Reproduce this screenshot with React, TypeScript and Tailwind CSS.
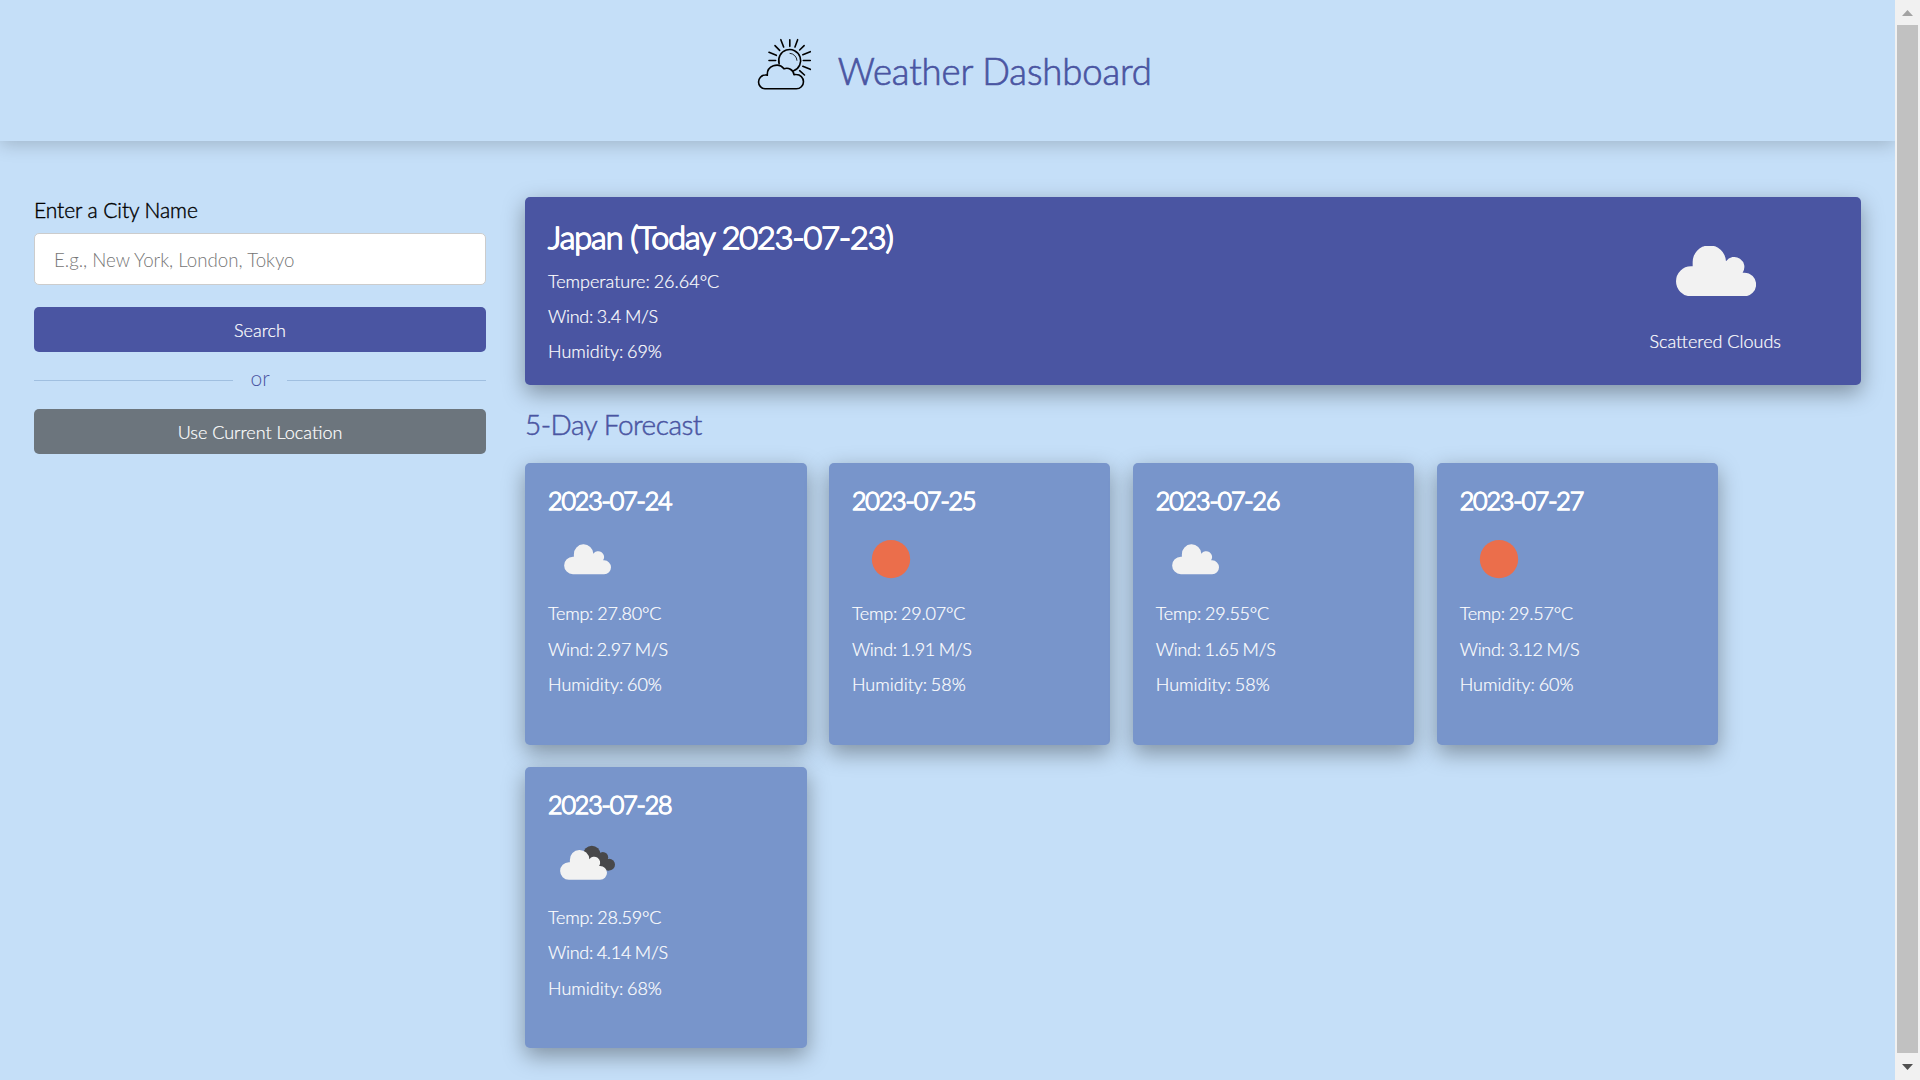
import React from 'react';

const CLOUD = 'M273 348A45 45 0 0 1 273 258H278V247A50 50 0 0 1 378 243A30 30 0 0 1 428 277H433A35.5 35.5 0 0 1 433 348Z';

type Kind = 'cloud' | 'sun' | 'broken';

function DayIcon({ kind }: { kind: Kind }) {
  return (
    <svg viewBox="0 0 234 234" className="mt-[5px] block h-[78px] w-[78px]">
      {kind === 'cloud' && (
        <path d={CLOUD} fill="#f2f2f2" transform="translate(-85 -41) scale(.585)" />
      )}
      {kind === 'sun' && <circle cx="117" cy="117.500" r="57.500" fill="#eb6e4b" />}
      {kind === 'broken' && (
        <g>
          <g fill="#48484a">
            <circle cx="131.500" cy="91" r="26" />
            <circle cx="164.500" cy="100" r="16" />
            <circle cx="183.500" cy="122" r="17.500" />
            <path d="M121 90H165L183 108V139.500H121Z" />
          </g>
          <path d={CLOUD} fill="#f2f2f2" transform="translate(-97 -36.200) scale(.585)" />
        </g>
      )}
    </svg>
  );
}

const days: { date: string; kind: Kind; temp: string; wind: string; humidity: number }[] = [
  { date: '2023-07-24', kind: 'cloud', temp: '27.80', wind: '2.97', humidity: 60 },
  { date: '2023-07-25', kind: 'sun', temp: '29.07', wind: '1.91', humidity: 58 },
  { date: '2023-07-26', kind: 'cloud', temp: '29.55', wind: '1.65', humidity: 58 },
  { date: '2023-07-27', kind: 'sun', temp: '29.57', wind: '3.12', humidity: 60 },
  { date: '2023-07-28', kind: 'broken', temp: '28.59', wind: '4.14', humidity: 68 },
];

function Logo() {
  return (
    <svg viewBox="50 52 166 162" className="h-[54px] w-[55.3px]" fill="none" stroke="#000" strokeWidth="4.800" strokeLinecap="round" strokeLinejoin="round">
      <path d="M74 207.500A20.800 20.800 0 0 1 74 166Q78 165.500 81 166.500A28 28 0 0 1 131 147.500A22 22 0 0 1 161 165Q165 164 168 164.500A21.500 21.500 0 0 1 168 207.500Z" />
      <path d="M116.500 132A33 33 0 1 1 160 153.500" />
      <path d="M149 101A22 22 0 0 1 170 122" strokeWidth="2.500" />
      <path d="M148.500 60V80M172 60L164 82M191.500 78L178 91M210 96L187.500 105M210 122.500H189M210 149L187.500 140M192.500 166L178 153M121.500 60L130 82M104 78L118 92M86 98L108 107M86 122.500H106" />
    </svg>
  );
}

export default function App() {
  return (
    <div className="flex h-[1080px] w-[1920px] overflow-hidden bg-[#c5dff8] font-['Lato',sans-serif] text-[18px] font-light">
      <div className="w-[1895px] overflow-hidden">
        <header className="flex h-[141px] pl-[756.500px] pt-[37px] shadow-[0_3px_18px_rgba(0,0,0,0.2)]">
          <Logo />
          <h1 className="ml-[26px] mt-[11.500px] whitespace-nowrap text-[36.500px] leading-[44px] tracking-[-0.120px] text-[#4a55a2] [-webkit-text-stroke:0.700px]">Weather Dashboard</h1>
        </header>
        <main className="flex pl-[34px] pt-[56px]">
          <section className="w-[452px]">
            <h3 className="whitespace-nowrap text-[21px] leading-[26px] tracking-[-0.080px] text-black [-webkit-text-stroke:0.400px]">Enter a City Name</h3>
            <input
              placeholder="E.g., New York, London, Tokyo"
              className="mt-[10px] block h-[52px] w-full rounded-[5px] border border-[#cccccc] bg-white px-[19px] pt-[2px] text-[18.700px] outline-none placeholder:text-[#757575]"
            />
            <button className="mt-[22px] block h-[45px] w-full rounded-[5px] bg-[#4a55a2] pt-[2px] text-white [-webkit-text-stroke:0.200px]">Search</button>
            <div className="flex h-[57px] items-center">
              <div className="h-px flex-1 bg-[#a0bfe0]" />
              <span className="mb-[6px] w-[54px] text-center text-[21px] leading-[28px] text-[#4a55a2]">or</span>
              <div className="h-px flex-1 bg-[#a0bfe0]" />
            </div>
            <button className="block h-[45px] w-full rounded-[5px] bg-[#6c757d] pt-[2px] text-white [-webkit-text-stroke:0.200px]">Use Current Location</button>
          </section>
          <section className="ml-[39px] w-[1336px]">
            <div className="flex h-[188px] justify-between rounded-[5px] bg-[#4a55a2] pl-[23px] pt-[20px] text-white shadow-[0_7.500px_22.500px_rgba(0,0,0,0.35)] [-webkit-text-stroke:0.200px]">
              <div>
                <h2 className="mb-[6.800px] whitespace-nowrap font-['Lato_Light'] text-[32.300px] font-bold leading-[40px] tracking-[-1px] [-webkit-text-stroke:0.300px]">Japan (Today 2023-07-23)</h2>
                <p className="leading-[35px] [word-spacing:-1px]">Temperature: 26.64°C</p>
                <p className="leading-[35px] tracking-[-0.300px] [word-spacing:-0.700px]">Wind: 3.4 M/S</p>
                <p className="leading-[35.500px] [word-spacing:-1.200px]">Humidity: 69%</p>
              </div>
              <div className="mr-[78px] flex w-[134px] flex-col items-center">
                <svg viewBox="228 197 241 151" className="mt-[28.700px] h-[50.300px] w-[80.300px]">
                  <path d={CLOUD} fill="#f2f2f2" />
                </svg>
                <p className="mr-[1.500px] mt-[28px] whitespace-nowrap leading-[35.500px]">Scattered Clouds</p>
              </div>
            </div>
            <h2 className="mt-[21px] whitespace-nowrap text-[28px] leading-[36px] tracking-[-0.500px] text-[#4a55a2] [-webkit-text-stroke:0.500px]">5-Day Forecast</h2>
            <ul className="mt-[21px] flex flex-wrap gap-[22.400px]">
              {days.map((d) => (
                <li key={d.date} className="h-[281.500px] w-[281.500px] rounded-[5px] bg-[#7895cb] pl-[23px] pt-[22px] text-white shadow-[0_7.500px_22.500px_rgba(0,0,0,0.35)] [-webkit-text-stroke:0.200px]">
                  <h3 className="font-['Lato_Light'] text-[25px] font-bold leading-[30px] tracking-[-1.100px] [-webkit-text-stroke:0.300px]">{d.date}</h3>
                  <DayIcon kind={d.kind} />
                  <div className="-mt-[2px] leading-[35.500px]">
                    <p className="tracking-[-0.220px] [word-spacing:-0.700px]">Temp: {d.temp}°C</p>
                    <p className="tracking-[-0.300px] [word-spacing:-0.800px]">Wind: {d.wind} M/S</p>
                    <p className="[word-spacing:-1.200px]">Humidity: {d.humidity}%</p>
                  </div>
                </li>
              ))}
            </ul>
          </section>
        </main>
      </div>
      <div className="flex w-[25px] flex-col items-center bg-[#f1f1f1]">
        <svg viewBox="0 0 25 25" className="h-[25px] w-[25px]"><path d="M7 16L12.500 10L18 16Z" fill="#a3a3a3" /></svg>
        <div className="mr-px h-[1028px] w-[21px] bg-[#c1c1c1]" />
        <svg viewBox="0 0 25 27" className="h-[27px] w-[25px]"><path d="M7 11L12.500 17L18 11Z" fill="#505050" /></svg>
      </div>
    </div>
  );
}
